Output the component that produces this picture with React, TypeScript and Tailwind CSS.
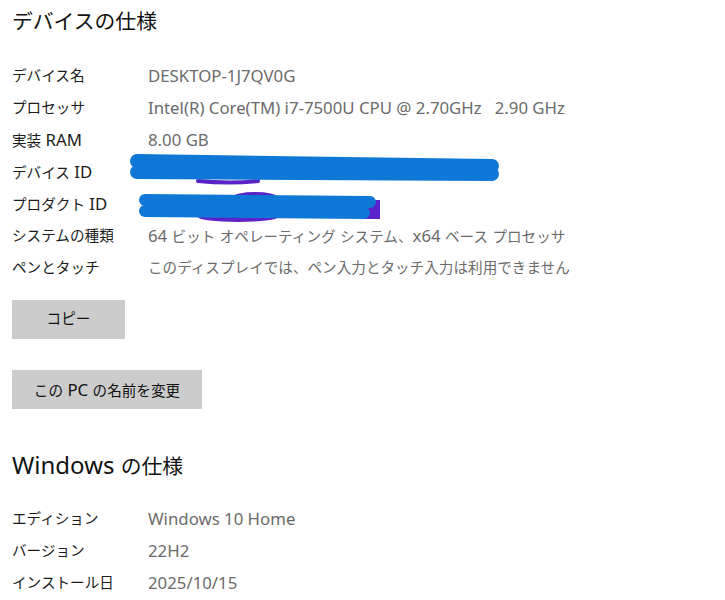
import React from "react";

const FONT = { fontFamily: '"Noto Sans", "Noto Sans CJK JP", sans-serif' };

// Latin runs are set a little larger than the kana/kanji, like Segoe UI next to Yu Gothic UI
function Mixed({ text, latin }: { text: string; latin: string }) {
  const parts = text.match(/[\x20-\x7e]+|[^\x20-\x7e]+/g) ?? [];
  return (
    <>
      {parts.map((p, i) =>
        /^[\x20-\x7e]+$/.test(p) ? (
          <span key={i} className={latin}>
            {p}
          </span>
        ) : (
          <span key={i}>{p}</span>
        )
      )}
    </>
  );
}

const DEVICE_ROWS: { label: string; value: string; redact?: "long" | "short" }[] = [
  { label: "デバイス名", value: "DESKTOP-1J7QV0G" },
  { label: "プロセッサ", value: "Intel(R) Core(TM) i7-7500U CPU @ 2.70GHz   2.90 GHz" },
  { label: "実装 RAM", value: "8.00 GB" },
  { label: "デバイス ID", value: "", redact: "long" },
  { label: "プロダクト ID", value: "", redact: "short" },
  { label: "システムの種類", value: "64 ビット オペレーティング システム、x64 ベース プロセッサ" },
  { label: "ペンとタッチ", value: "このディスプレイでは、ペン入力とタッチ入力は利用できません" },
];

const WIN_ROWS = [
  { label: "エディション", value: "Windows 10 Home" },
  { label: "バージョン", value: "22H2" },
  { label: "インストール日", value: "2025/10/15" },
];

function Scribble({ kind }: { kind: "long" | "short" }) {
  if (kind === "long") {
    return (
      <svg className="absolute left-[118px] -top-[4px]" width="372" height="34" viewBox="0 0 372 34">
        <path d="M68 29 Q100 32 128 29" stroke="#5a22c8" strokeWidth="4" fill="none" strokeLinecap="round" />
        <path d="M7 9 L362 14" stroke="#0f78d6" strokeWidth="14" fill="none" strokeLinecap="round" />
        <path d="M7 20 L362 22" stroke="#0f78d6" strokeWidth="14" fill="none" strokeLinecap="round" />
      </svg>
    );
  }
  return (
    <svg className="absolute left-[126px] top-[2px]" width="246" height="34" viewBox="0 0 246 34">
      <ellipse cx="117" cy="7" rx="22" ry="5" fill="#5a22c8" />
      <ellipse cx="100" cy="27" rx="40" ry="5" fill="#5a22c8" />
      <path d="M228 10 L242 10 L242 29 L226 29 Z" fill="#5a22c8" />
      <path d="M7 10 L232 12" stroke="#0f78d6" strokeWidth="12" fill="none" strokeLinecap="round" />
      <path d="M7 21 L226 23" stroke="#0f78d6" strokeWidth="12" fill="none" strokeLinecap="round" />
    </svg>
  );
}

function SpecRow({ label, value, redact }: { label: string; value: string; redact?: "long" | "short" }) {
  return (
    <div className="relative flex items-center h-8 text-[14.6px]">
      <div className="w-[136px] text-[#1b1b1b] whitespace-pre">
        <Mixed text={label} latin="text-[16.8px]" />
      </div>
      <div className="flex-1 text-[#6b6b6b] whitespace-pre">
        <Mixed text={value} latin="text-[16.8px]" />
      </div>
      {redact && <Scribble kind={redact} />}
    </div>
  );
}

export default function App() {
  return (
    <div className="w-[725px] h-[600px] bg-white overflow-hidden pl-3" style={FONT}>
      <h1 className="text-[20.8px] text-[#111] leading-none pt-[11px]">デバイスの仕様</h1>

      <div className="mt-[28px]">
        {DEVICE_ROWS.map((row) => (
          <SpecRow key={row.label} {...row} />
        ))}
      </div>

      <button className="mt-[16px] w-[113px] h-[39px] bg-[#cccccc] text-[14.6px] text-[#111] block">
        コピー
      </button>
      <button className="mt-[31px] w-[190px] h-[39px] bg-[#cccccc] text-[14.6px] text-[#111] block">
        <Mixed text="この PC の名前を変更" latin="text-[16.8px]" />
      </button>

      <h2 className="text-[20.8px] text-[#111] leading-none mt-[44px]">
        <Mixed text="Windows の仕様" latin="text-[24px]" />
      </h2>

      <div className="mt-[26px]">
        {WIN_ROWS.map((row) => (
          <SpecRow key={row.label} {...row} />
        ))}
      </div>
    </div>
  );
}
